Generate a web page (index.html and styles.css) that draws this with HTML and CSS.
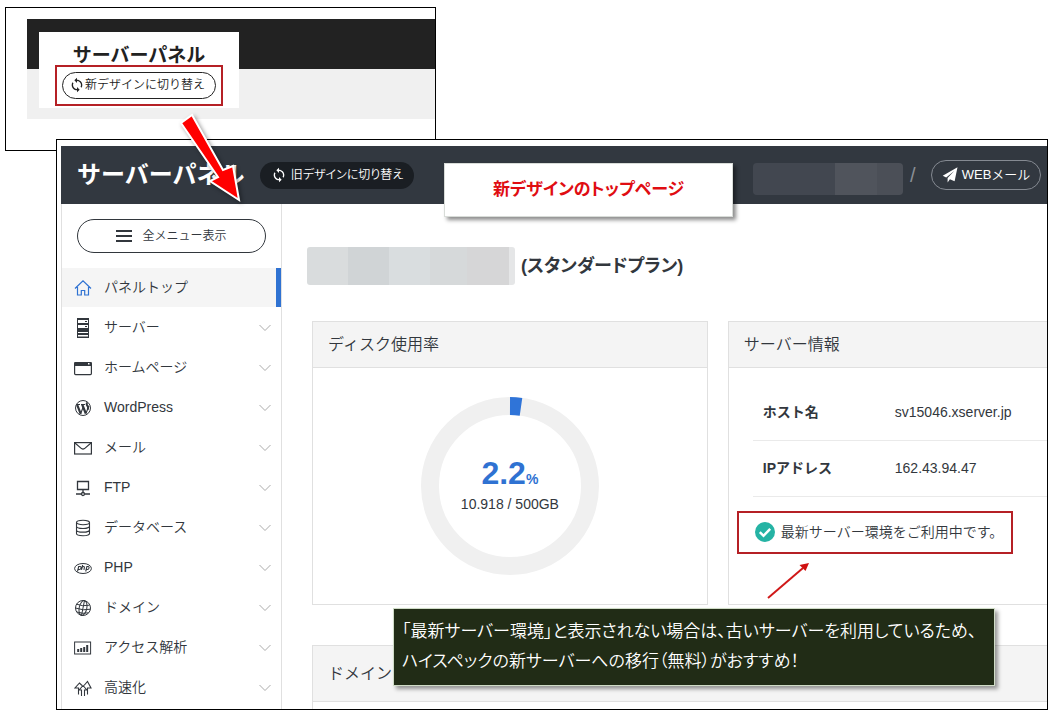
FILE: index.html
```
<!DOCTYPE html>
<html lang="ja">
<head>
<meta charset="utf-8">
<meta name="viewport" content="width=device-width, initial-scale=1">
<title>サーバーパネル</title>
<link rel="stylesheet" href="styles.css">
</head>
<body>
<svg class="defs" width="0" height="0" aria-hidden="true">
  <symbol id="sync" viewBox="0 0 24 24"><path fill="currentColor" d="M12 4V1L8 5l4 4V6c3.300 0 6 2.700 6 6 0 1-.25 2-.7 2.800l1.460 1.460A7.930 7.930 0 0 0 20 12c0-4.420-3.580-8-8-8zm0 14c-3.300 0-6-2.700-6-6 0-1 .25-2 .7-2.800L5.240 7.740A7.930 7.930 0 0 0 4 12c0 4.420 3.580 8 8 8v3l4-4-4-4v3z"/></symbol>
  <symbol id="chev" viewBox="0 0 12 8"><path fill="none" stroke="currentColor" d="M.5 1 6 6.500 11.500 1"/></symbol>
</svg>

<section class="old-frame">
  <div class="old-page">
    <div class="old-card">
      <h2 class="old-title">サーバーパネル</h2>
      <div class="mark old-mark">
        <button class="old-switch" type="button"><svg class="sync"><use href="#sync"/></svg>新デザインに切り替え</button>
      </div>
    </div>
  </div>
</section>

<section class="new-frame">
  <header class="topbar">
    <h1 class="brand">サーバーパネル</h1>
    <button class="new-switch" type="button"><svg class="sync"><use href="#sync"/></svg>旧デザインに切り替え</button>
    <div class="account">
      <span class="masked-user"></span>
      <span class="slash">/</span>
      <button class="webmail" type="button"><svg class="plane" viewBox="0 0 16 16"><path fill="currentColor" d="M15.500.3.700 8.800l3.500 1.600L12.200 4 5.600 11v4.500l2.300-3.200 4.700 2z"/></svg>WEBメール</button>
    </div>
  </header>
  <div class="columns">
    <nav class="sidebar">
      <button class="all-menu" type="button"><svg class="bars" viewBox="0 0 16 12"><path stroke="currentColor" stroke-width="2" d="M0 1h16M0 6h16M0 11h16"/></svg>全メニュー表示</button>
      <ul class="menu">
        <li><a class="item active" href="#"><svg class="icon" viewBox="0 0 18 18" fill="none" stroke="currentColor" stroke-width="1.2"><path d="M1 9.500 9 1.800l8 7.700M3.500 8v8h3.800v-4.500h3.400V16h3.800V8"/></svg><span>パネルトップ</span></a></li>
        <li><a class="item" href="#"><svg class="icon" viewBox="0 0 18 20"><path fill="currentColor" d="M3 0h12v20H3z"/><path fill="#fff" d="M4 2h10v3H4zM4 7h10v3H4zM4 14h10v1H4zM4 17h10v1.500H4z"/><path stroke="currentColor" d="M11 3.500h2M11 8.500h2"/></svg><span>サーバー</span><svg class="chev"><use href="#chev"/></svg></a></li>
        <li><a class="item" href="#"><svg class="icon" viewBox="0 0 18 18"><rect x=".6" y="3.600" width="16.800" height="12" rx="1" fill="none" stroke="currentColor" stroke-width="1.200"/><path fill="currentColor" d="M.5 3h17v4H.5z"/><path fill="#fff" d="M14 4h1.500v1.500H14z"/></svg><span>ホームページ</span><svg class="chev"><use href="#chev"/></svg></a></li>
        <li><a class="item" href="#"><svg class="icon" viewBox="0 0 18 18"><circle cx="9" cy="9" r="7.500" fill="none" stroke="currentColor"/><path fill="none" stroke="currentColor" stroke-width="2.200" d="m3.200 5.800 3.500 9M8.200 5.500l3.600 9"/><path fill="none" stroke="currentColor" stroke-width="1.100" d="M2.500 5.500H6M7 5.500h4M6.700 14.500 9.200 8M11.800 14.800l3.200-8"/><path fill="none" stroke="currentColor" stroke-width="2" d="M13.500 3.500c-1.800 1-.3 3 .4 4.300.4.800.2 1.800-.2 2.800"/></svg><span>WordPress</span><svg class="chev"><use href="#chev"/></svg></a></li>
        <li><a class="item" href="#"><svg class="icon" viewBox="0 0 18 18" fill="none" stroke="currentColor" stroke-width="1.200"><rect x=".6" y="3.600" width="16.800" height="11.400"/><path d="m1 4 6.500 5.600q1.500 1 3 0L17 4"/></svg><span>メール</span><svg class="chev"><use href="#chev"/></svg></a></li>
        <li><a class="item" href="#"><svg class="icon" viewBox="0 0 18 18" fill="none" stroke="currentColor" stroke-width="1.300"><path d="M3.500 2.500h11v8h-11zM9 10.500v3M2 15h5M11 15h5"/><circle cx="9" cy="15" r="1.500"/></svg><span>FTP</span><svg class="chev"><use href="#chev"/></svg></a></li>
        <li><a class="item" href="#"><svg class="icon" viewBox="0 0 18 18" fill="none" stroke="currentColor" stroke-width="1.100"><ellipse cx="9" cy="3.500" rx="6.500" ry="2.200"/><path d="M2.500 3.500v11c0 3 13 3 13 0v-11M2.500 7.200c0 3 13 3 13 0M2.500 10.900c0 3 13 3 13 0"/></svg><span>データベース</span><svg class="chev"><use href="#chev"/></svg></a></li>
        <li><a class="item" href="#"><svg class="icon" viewBox="0 0 18 18" fill="none" stroke="currentColor"><ellipse cx="9" cy="9.500" rx="8.400" ry="5"/><path stroke-width="1.100" d="m3.500 12.500 1.200-5h1.500c1.500 0 1 3-.8 3H4.200M8.700 6l-1.200 4.800M8.300 8c1.800-1 2.400-.3 2 1l-.4 1.800M11.700 12.500l1.200-5h1.300c1.500 0 1 3-.8 3h-1.200"/></svg><span>PHP</span><svg class="chev"><use href="#chev"/></svg></a></li>
        <li><a class="item" href="#"><svg class="icon" viewBox="0 0 18 18" fill="none" stroke="currentColor"><circle cx="9" cy="9" r="7.500"/><ellipse cx="9" cy="9" rx="3.800" ry="7.500" transform="rotate(12 9 9)"/><path d="M10.500 1.500 7.500 16.500M2.500 5.200q6 2.500 13 1M1.500 9q8 3 15 1.200M3 13q6 2.200 11.500.8"/></svg><span>ドメイン</span><svg class="chev"><use href="#chev"/></svg></a></li>
        <li><a class="item" href="#"><svg class="icon" viewBox="0 0 18 18"><rect x=".6" y="3" width="16" height="12" fill="none" stroke="currentColor"/><path stroke="currentColor" stroke-width="2" d="M4.200 10v3M7.200 9v4M10.200 8v5M13.200 6v7"/></svg><span>アクセス解析</span><svg class="chev"><use href="#chev"/></svg></a></li>
        <li><a class="item" href="#"><svg class="icon" viewBox="0 0 18 18" fill="none" stroke="currentColor" stroke-width="1.100"><path d="M7.500 17v-6H5.200L9 6.500l3.800 4.500h-2.300v6M4.500 15.500V9H1l4.500-5 2.500 2.500M13.500 15.500V9H17l-3.500-6.500L10 6.500"/></svg><span>高速化</span><svg class="chev"><use href="#chev"/></svg></a></li>
      </ul>
    </nav>
    <main class="main">
      <div class="plan"><span class="masked-id"></span><strong>(スタンダードプラン)</strong></div>
      <div class="panels">
        <section class="panel">
          <h2 class="panel-title">ディスク使用率</h2>
          <div class="usage">
            <svg class="ring" viewBox="0 0 178 178" fill="none" stroke-width="18"><circle cx="89" cy="89" r="80" stroke="#f0f0f0"/><path stroke="#2f74d8" d="M89 9a80 80 0 0 1 11 .8"/></svg>
            <div class="usage-text"><p class="percent">2.2<small>%</small></p><p class="amount">10.918 / 500GB</p></div>
          </div>
        </section>
        <section class="panel open">
          <h2 class="panel-title">サーバー情報</h2>
          <table class="info">
            <tr><th scope="row">ホスト名</th><td>sv15046.xserver.jp</td></tr>
            <tr><th scope="row">IPアドレス</th><td>162.43.94.47</td></tr>
          </table>
          <p class="mark status"><svg class="check" viewBox="0 0 20 20"><circle cx="10" cy="10" r="10" fill="#25b3a4"/><path fill="none" stroke="#fff" stroke-width="2.500" d="m4.800 10.200 3.700 3.600 6.700-7"/></svg>最新サーバー環境をご利用中です。</p>
        </section>
        <section class="panel open wide">
          <h2 class="panel-title">ドメイン</h2>
          <div class="panel-rest"></div>
        </section>
      </div>
    </main>
  </div>
</section>

<p class="note note-top">新デザインのトップページ</p>
<p class="note note-bottom">「最新サーバー環境」と表示されない場合は、古いサーバーを利用しているため、<br>ハイスペックの新サーバーへの移行（無料）がおすすめ！</p>
<svg class="big-arrow" viewBox="0 0 70 92"><path fill="#f00" stroke="#fff" stroke-width="2" d="M11 12 22 4l31 55 10-4 6 34-29-19 8-4z"/></svg>
<svg class="small-arrow" viewBox="0 0 46 40"><path stroke="#d01818" stroke-width="2" d="M2 37 37 7"/><path fill="#d01010" d="m43 2-3.500 8-6-6z"/></svg>
</body>
</html>
```
FILE: styles.css
```
* { box-sizing: border-box; }
body {
  position: relative;
  margin: 0;
  padding: 7px 5px 6px;
  background: #fff;
  color: #32373d;
  font: 350 14px/20px "Liberation Sans", "Noto Sans CJK JP", sans-serif;
}
h1, h2, p, ul { margin: 0; padding: 0; }
ul { list-style: none; }
button { font: inherit; color: inherit; padding: 0; display: flex; align-items: center; justify-content: center; }
.defs { position: absolute; }
.mark { border: 2px solid #b52025; }
.sync { width: 16px; height: 16px; flex: none; }

.old-frame {
  max-width: 431px;
  padding: 11px 0 31px 21px;
  border: 1px solid #000;
}
.old-page {
  padding: 13px 0 11px 12px;
  background: linear-gradient(#222 50px, #f0f0f0 50px);
}
.old-card { width: 200px; padding: 15px 16px 2px; background: #fff; color: #222; }
.old-title { font-size: 19px; line-height: 18px; text-align: center; }
.old-mark { padding: 5px; }
.old-switch {
  width: 100%;
  height: 27px;
  padding: 0 4px 2px 0;
  border: 1px solid #222;
  border-radius: 14px;
  background: #fff;
  font-size: 12px;
}

.new-frame {
  position: relative;
  margin: -12px 0 0 51px;
  padding: 6px 0 0 4px;
  border: 1px solid #000;
  background: #fff;
}
.topbar {
  display: flex;
  align-items: center;
  height: 58px;
  padding: 0 6px 0 16px;
  background: #323840;
  color: #fff;
}
.brand { width: 183px; font-size: 24px; line-height: 32px; white-space: nowrap; }
.new-switch {
  width: 154px;
  height: 27px;
  gap: 4px;
  border: 0;
  border-radius: 14px;
  background: #1a1e23;
  font-size: 12px;
  font-feature-settings: "palt";
}
.account { display: flex; align-items: center; margin-left: auto; }
.masked-user {
  width: 150px;
  height: 32px;
  margin-top: 8px;
  border-radius: 4px;
  background: linear-gradient(90deg, #424750 0 82px, #50545c 82px 124px, #4b4f57 124px);
}
.slash { width: 28px; padding-left: 7px; color: #8a8f96; font-size: 20px; }
.webmail {
  width: 110px;
  height: 30px;
  gap: 4px;
  border: 1px solid #858a92;
  border-radius: 15px;
  background: none;
  font-size: 13px;
}
.plane { width: 16px; height: 16px; }

.columns { display: flex; }
.sidebar {
  width: 221px;
  flex: none;
  padding-top: 15px;
  border: solid #e0e0e0;
  border-width: 0 1px;
}
.all-menu {
  width: 189px;
  height: 34px;
  margin: 0 15px 15px;
  gap: 10px;
  border: 1px solid #32373d;
  border-radius: 17px;
  background: #fff;
  font-size: 12px;
}
.bars { width: 16px; height: 12px; }
.menu li { height: 40px; }
.item {
  display: flex;
  align-items: center;
  gap: 12px;
  height: 39px;
  padding: 0 10px 0 12px;
  color: inherit;
  text-decoration: none;
}
.item span { flex: 1; padding-bottom: 2px; }
.active { border-right: 5px solid #2f72d2; background: #f5f5f5; }
.icon { width: 18px; height: 20px; flex: none; }
.active .icon { color: #2f72d2; }
.chev { width: 12px; height: 8px; color: #aaa; }

.main { flex: 1; min-width: 0; padding: 43px 0 0 25px; }
.plan { display: flex; align-items: center; gap: 6px; font-size: 18px; font-feature-settings: "palt"; }
.masked-id {
  width: 208px;
  height: 38px;
  border-radius: 3px;
  background: linear-gradient(90deg, #d9dcdd 0 41px, #d0d4d6 41px 82px, #d9dddf 82px 123px, #d6d9da 123px 160px, #d6d6d7 160px 202px, #e5e6e7 202px);
}
.panels {
  display: grid;
  grid-template-columns: 31fr 25fr;
  gap: 40px 20px;
  margin: 36px 0 0 5px;
}
.panel { border: 1px solid #e0e0e0; }
.open { border-right: 0; }
.panel-title {
  padding: 11px 15px;
  border-bottom: 1px solid #e0e0e0;
  background: #f4f4f4;
  font-size: 16px;
  font-weight: inherit;
  line-height: 23px;
}
.wide { grid-column: 1 / -1; border-bottom: 0; }
.wide .panel-title { padding: 16px 15px; }
.panel-rest { height: 7px; }
.usage { display: grid; place-items: center; padding: 29px 0; }
.usage > * { grid-area: 1 / 1; }
.ring { width: 178px; height: 178px; }
.usage-text { text-align: center; }
.percent { color: #2f72d2; font-size: 32px; font-weight: 700; line-height: 30px; }
.percent small { font-size: 14px; }
.info { width: calc(100% - 24px); margin: 16px 0 0 24px; border-collapse: collapse; }
.info th, .info td { height: 56px; padding: 0; border-bottom: 1px solid #eaeaea; text-align: left; }
.info th { width: 142px; padding-left: 10px; }
.status {
  display: flex;
  align-items: center;
  gap: 6px;
  width: 276px;
  height: 43px;
  margin: 14px 0 0 8px;
  padding-left: 16px;
  white-space: nowrap;
}
.check { width: 20px; height: 20px; flex: none; }

.note { position: absolute; font-feature-settings: "palt"; white-space: nowrap; }
.note-top {
  left: 444px;
  top: 163px;
  padding: 16px 48px;
  border: 1px solid #d8dcd8;
  background: #fff;
  box-shadow: 3px 3px 4px rgba(0, 0, 0, .45);
  color: #e00d12;
  font-size: 17px;
  font-weight: 700;
}
.note-bottom {
  left: 393px;
  top: 608px;
  width: 602px;
  padding: 8px;
  border: 1px solid #cfdcc6;
  background: #212c16;
  box-shadow: 3px 3px 4px rgba(0, 0, 0, .4);
  color: #fff;
  font-size: 17px;
  line-height: 30px;
}
.big-arrow {
  position: absolute;
  left: 170px;
  top: 111px;
  width: 70px;
  height: 92px;
  overflow: visible;
  filter: drop-shadow(2px 2px 2px rgba(0, 0, 0, .4));
}
.small-arrow { position: absolute; left: 766px; top: 561px; width: 46px; height: 40px; }
```
